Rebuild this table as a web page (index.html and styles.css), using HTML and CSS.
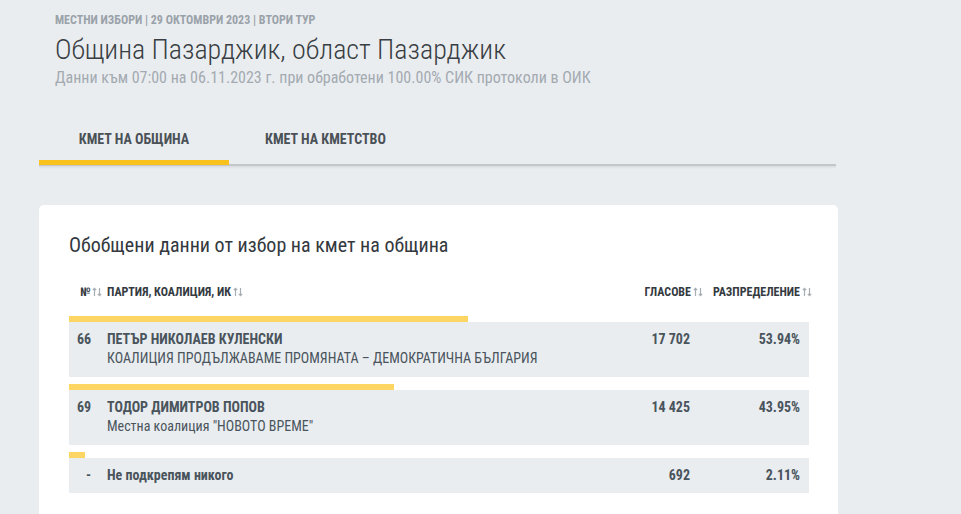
FILE: index.html
```html
<!DOCTYPE html>
<html lang="bg">
<head>
<meta charset="utf-8">
<link rel="stylesheet" href="styles.css">
</head>
<body>
<div class="page">
  <header class="head">
    <div class="kicker">МЕСТНИ ИЗБОРИ | 29 ОКТОМВРИ 2023 | ВТОРИ ТУР</div>
    <h1 class="title">Община Пазарджик, област Пазарджик</h1>
    <div class="sub">Данни към 07:00 на 06.11.2023 г. при обработени 100.00% СИК протоколи в ОИК</div>
  </header>

  <nav class="tabs">
    <div class="tab active">КМЕТ НА ОБЩИНА</div>
    <div class="tab">КМЕТ НА КМЕТСТВО</div>
  </nav>

  <section class="card">
    <h2 class="card-title">Обобщени данни от избор на кмет на община</h2>
    <div class="table">
      <div class="thead">
        <div class="th th-num">№<svg class="sort" viewBox="0 0 10 10"><path d="M2.5 9V1.5M0.8 3.2L2.5 1.3 4.2 3.2M7.5 1v7.5M5.8 6.8L7.5 8.7 9.2 6.8"/></svg></div>
        <div class="th th-name">ПАРТИЯ, КОАЛИЦИЯ, ИК<svg class="sort" viewBox="0 0 10 10"><path d="M2.5 9V1.5M0.8 3.2L2.5 1.3 4.2 3.2M7.5 1v7.5M5.8 6.8L7.5 8.7 9.2 6.8"/></svg></div>
        <div class="th th-votes">ГЛАСОВЕ<svg class="sort" viewBox="0 0 10 10"><path d="M2.5 9V1.5M0.8 3.2L2.5 1.3 4.2 3.2M7.5 1v7.5M5.8 6.8L7.5 8.7 9.2 6.8"/></svg></div>
        <div class="th th-pct">РАЗПРЕДЕЛЕНИЕ<svg class="sort" viewBox="0 0 10 10"><path d="M2.5 9V1.5M0.8 3.2L2.5 1.3 4.2 3.2M7.5 1v7.5M5.8 6.8L7.5 8.7 9.2 6.8"/></svg></div>
      </div>

      <div class="entry">
        <div class="bar" style="width:53.94%"></div>
        <div class="row">
          <div class="num">66</div>
          <div class="who">
            <div class="name">ПЕТЪР НИКОЛАЕВ КУЛЕНСКИ</div>
            <div class="party">КОАЛИЦИЯ ПРОДЪЛЖАВАМЕ ПРОМЯНАТА – ДЕМОКРАТИЧНА БЪЛГАРИЯ</div>
          </div>
          <div class="votes">17 702</div>
          <div class="pct">53.94%</div>
        </div>
      </div>

      <div class="entry">
        <div class="bar" style="width:43.95%"></div>
        <div class="row">
          <div class="num">69</div>
          <div class="who">
            <div class="name">ТОДОР ДИМИТРОВ ПОПОВ</div>
            <div class="party">Местна коалиция "НОВОТО ВРЕМЕ"</div>
          </div>
          <div class="votes">14 425</div>
          <div class="pct">43.95%</div>
        </div>
      </div>

      <div class="entry">
        <div class="bar" style="width:2.11%"></div>
        <div class="row row-short">
          <div class="num">-</div>
          <div class="who">
            <div class="name">Не подкрепям никого</div>
          </div>
          <div class="votes">692</div>
          <div class="pct">2.11%</div>
        </div>
      </div>
    </div>
  </section>
</div>
</body>
</html>
```

FILE: styles.css
```css
* { box-sizing: border-box; }
html, body { margin: 0; padding: 0; }
body {
  background: #eaedf0;
  font-family: "Roboto Condensed", "Liberation Sans Narrow", Roboto, "Noto Sans", sans-serif;
  font-stretch: condensed;
  color: #3d4449;
  width: 961px;
  height: 514px;
  overflow: hidden;
}
.page {
  padding: 12px 0 0 39px;
  width: 838px;
}
.head { padding-left: 16px; }
.kicker {
  font-size: 12px;
  font-weight: 700;
  color: #9aa2a9;
  line-height: 16px;
}
.title {
  margin: 5px 0 0;
  font-size: 28px;
  font-weight: 300;
  line-height: 34px;
  color: #383e43;
}
.sub {
  margin-top: 1px;
  font-size: 16px;
  color: #a3aab0;
  line-height: 20px;
}
.tabs {
  position: relative;
  margin-top: 30px;
  display: flex;
  width: 797px;
  border-bottom: 2px solid #c4c7ca;
}
.tabs::after {
  content: "";
  position: absolute;
  left: 0;
  right: 0;
  bottom: -5px;
  height: 3px;
  background: linear-gradient(rgba(0,0,0,0.07), rgba(0,0,0,0));
}
.tab {
  font-size: 14px;
  font-weight: 700;
  color: #4a5157;
  padding: 12px 36px 12px;
  line-height: 18px;
  margin-bottom: -1px;
  border-bottom: 5px solid transparent;
  position: relative;
  z-index: 1;
}
.tab.active {
  border-bottom-color: #f9c11b;
  width: 190px;
  text-align: center;
  padding-left: 0;
  padding-right: 0;
}
.card {
  margin-top: 39px;
  background: #fff;
  border-radius: 5px;
  width: 799px;
  height: 330px;
  padding: 27px 29px 0 30px;
}
.card-title {
  margin: 0;
  font-size: 20px;
  font-weight: 400;
  color: #33393e;
  line-height: 26px;
}
.table { margin-top: 26px; }
.thead {
  display: grid;
  grid-template-columns: 38px 1fr 120px 110px;
  font-size: 12px;
  font-weight: 700;
  color: #343a3f;
  line-height: 16px;
  padding-right: 9px;
}
.th { display: flex; align-items: center; }
.th-num { padding-left: 11px; }
.th-votes, .th-pct { justify-content: flex-end; }
.th-votes { margin-right: -13px; }
.th-pct { margin-right: -12px; }
.sort {
  width: 10px;
  height: 10px;
  margin-left: 2px;
  fill: none;
  stroke: #a6adb3;
  stroke-width: 1.2;
}
.entry { margin-top: 7px; }
.thead + .entry { margin-top: 16px; }
.bar {
  height: 6px;
  background: #fcd562;
}
.row {
  display: grid;
  grid-template-columns: 38px 1fr 120px 110px;
  background: #e9edf0;
  padding: 8px 9px 8px 0;
  min-height: 55px;
  font-size: 14px;
  line-height: 19px;
  color: #4a545c;
}
.row-short { min-height: 35px; padding-top: 8px; }
.num { font-weight: 700; padding-left: 8px; }
.row-short .num { padding-left: 17px; }
.name { font-weight: 700; }
.party { font-weight: 400; }
.votes, .pct { font-weight: 700; text-align: right; }
```
